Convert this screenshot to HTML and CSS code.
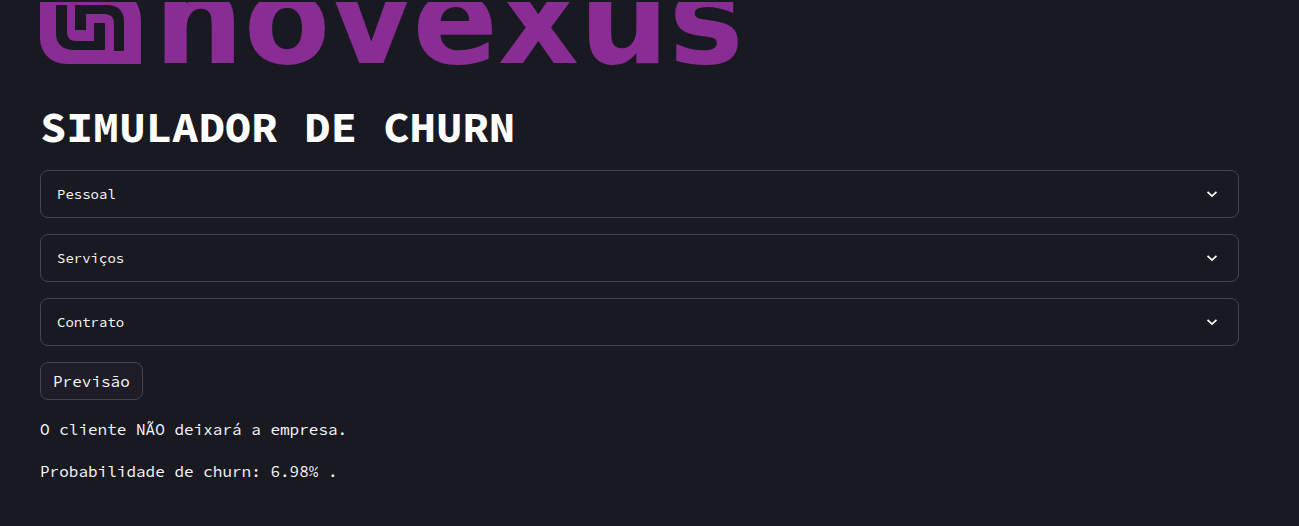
FILE: index.html
```html
<!DOCTYPE html>
<html lang="pt-BR">
<head>
<meta charset="utf-8">
<meta name="viewport" content="width=device-width, initial-scale=1">
<title>Simulador de Churn</title>
<link rel="stylesheet" href="styles.css">
</head>
<body>
<main class="page">
  <div class="brand">
    <svg class="brand-mark" viewBox="0 0 101 64" aria-hidden="true">
      <path fill="#892c94" d="M0 0H96Q101 8 101 20V62H27C11 62 0 51 0 35Z"/>
      <path fill="#191922" d="M16 3H27V30Q27 39 36 39H54V21H65V48H33Q16 47 16 31Z"/>
      <path fill="#191922" d="M35 3H68Q84 4 84 20V49H74V22Q74 12 65 12H46V28H35Z"/>
    </svg>
    <span class="brand-name">novexus</span>
  </div>
  <h1 class="title">SIMULADOR DE CHURN</h1>
  <div class="stack">
    <details class="expander">
      <summary class="expander-head">Pessoal
        <svg class="chevron" viewBox="0 0 12 12" aria-hidden="true"><path d="M1.5 3.8 6 8.1 10.5 3.8"/></svg>
      </summary>
    </details>
    <details class="expander">
      <summary class="expander-head">Serviços
        <svg class="chevron" viewBox="0 0 12 12" aria-hidden="true"><path d="M1.5 3.8 6 8.1 10.5 3.8"/></svg>
      </summary>
    </details>
    <details class="expander">
      <summary class="expander-head">Contrato
        <svg class="chevron" viewBox="0 0 12 12" aria-hidden="true"><path d="M1.5 3.8 6 8.1 10.5 3.8"/></svg>
      </summary>
    </details>
    <button class="button" type="button">Previsão</button>
    <p class="result">O cliente NÃO deixará a empresa.</p>
    <p class="result">Probabilidade de churn: 6.98% .</p>
  </div>
</main>
</body>
</html>
```
FILE: styles.css
```css
* {
  box-sizing: border-box;
}

body {
  margin: 0;
  background: #191922;
  color: #fafafa;
  font: 16px/26px "Source Code Pro", "Liberation Mono", monospace;
}

.page {
  padding: 2px 60px 40px 40px;
}

.brand {
  display: flex;
  gap: 13px;
  height: 64px;
  overflow: hidden;
}

.brand-mark {
  flex: none;
  width: 101px;
  height: 64px;
}

.brand-name {
  color: #892c94;
  font: bold 126px/36px "DejaVu Sans", sans-serif;
}

.title {
  margin: 0;
  padding: 35px 0 17px;
  color: #fff;
  font-size: 44px;
  font-weight: 700;
  line-height: 52px;
}

.stack {
  display: flex;
  flex-direction: column;
  align-items: stretch;
  gap: 16px;
}

.expander {
  border: 1px solid #44444d;
  border-radius: 8px;
}

.expander-head {
  display: flex;
  align-items: center;
  justify-content: space-between;
  padding: 12px 20px 12px 16px;
  font-size: 14px;
  line-height: 22px;
  list-style: none;
  cursor: pointer;
}

.chevron {
  width: 12px;
  height: 12px;
  fill: none;
  stroke: #fafafa;
  stroke-width: 1.8;
}

.button {
  align-self: flex-start;
  padding: 5px 12px;
  border: 1px solid #44444d;
  border-radius: 8px;
  background: #1d1c27;
  color: inherit;
  font: inherit;
  cursor: pointer;
}

.result {
  margin: 0;
}
```
